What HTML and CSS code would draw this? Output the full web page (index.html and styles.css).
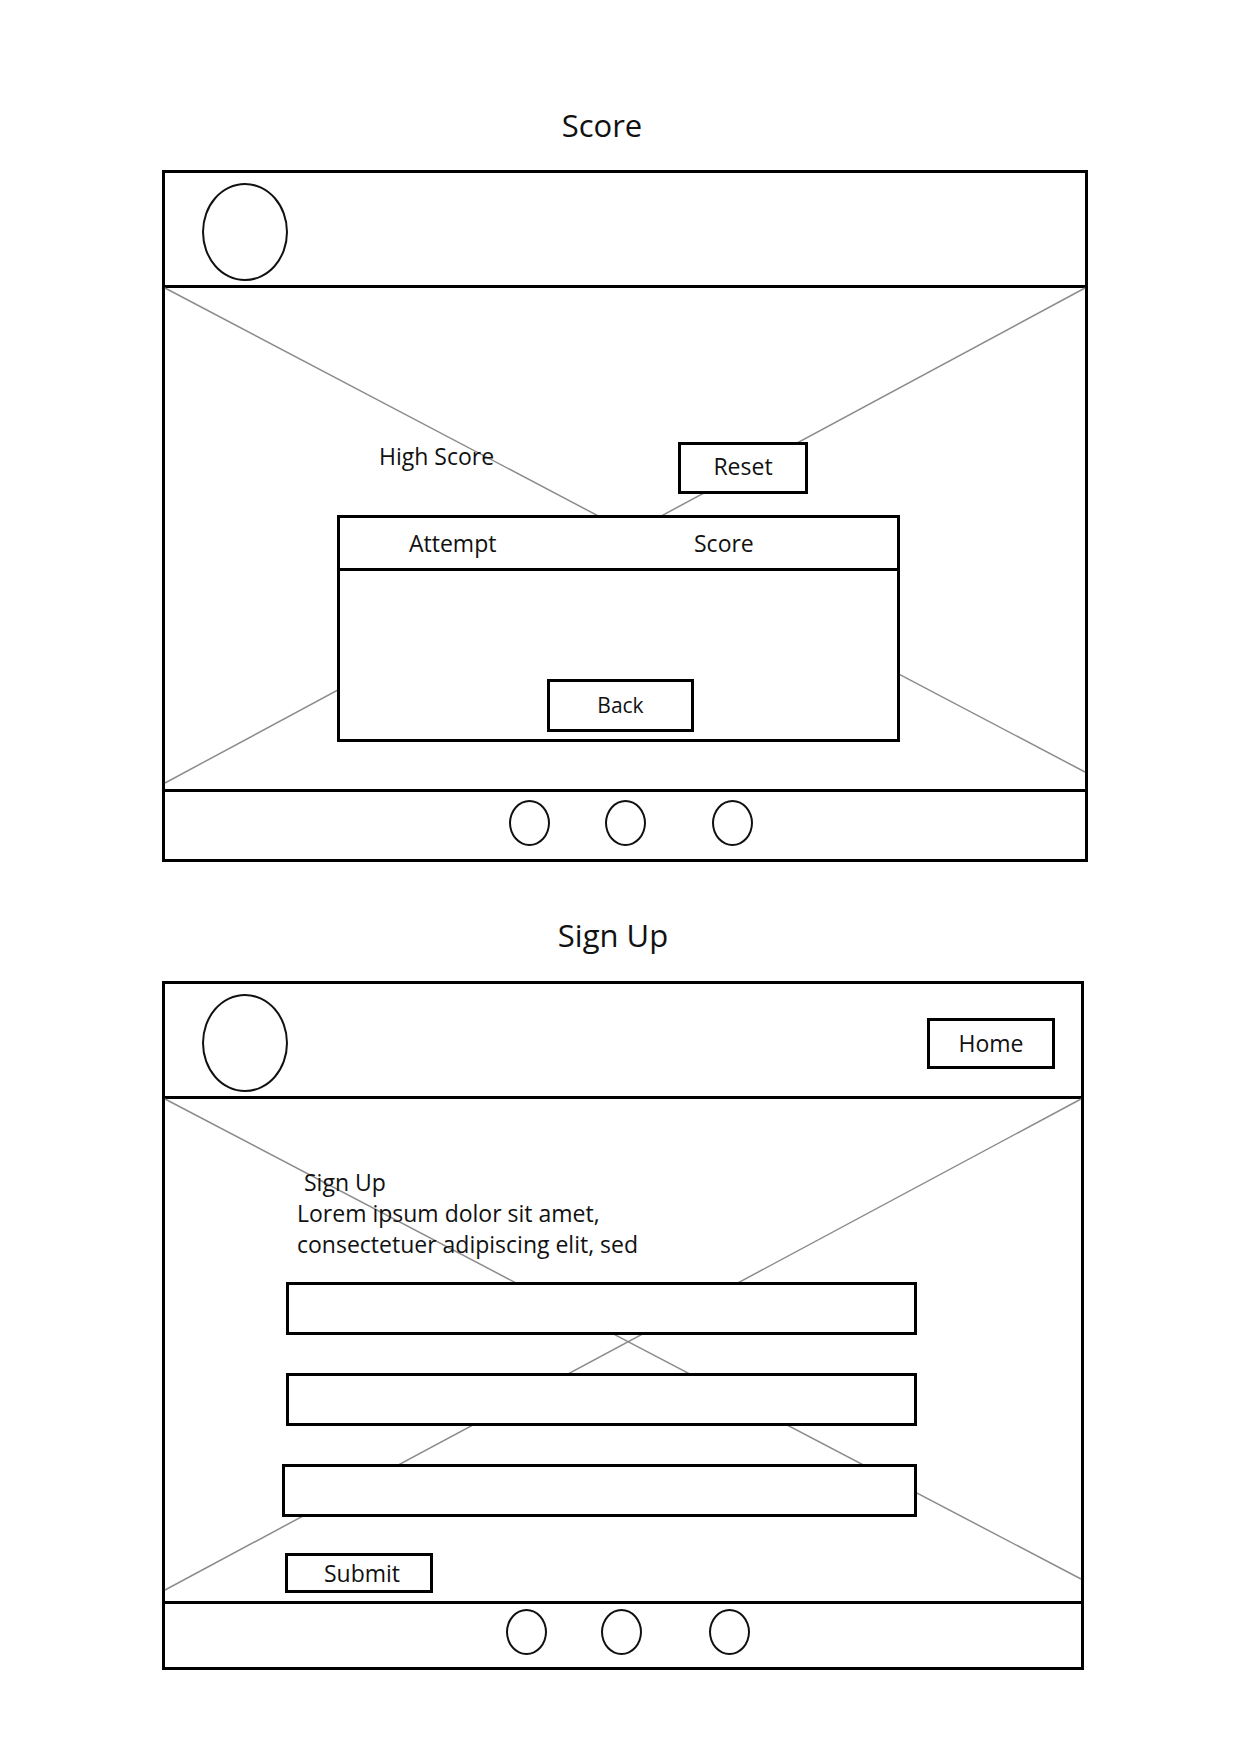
FILE: index.html
```html
<!DOCTYPE html>
<html lang="en">
<head>
<meta charset="utf-8">
<title>Wireframes</title>
<link rel="stylesheet" href="styles.css">
</head>
<body>
<div class="page">
  <section class="screen">
    <h1 class="screen-title title-score">Score</h1>
    <div class="frame frame-score">
      <header class="frame-header">
        <div class="logo"></div>
      </header>
      <main class="frame-body body-score">
        <svg class="placeholder-x" viewBox="0 0 920 501" preserveAspectRatio="none">
          <line x1="0" y1="0" x2="920" y2="484"/>
          <line x1="920" y1="0" x2="0" y2="495"/>
        </svg>
        <div class="score-content">
          <div class="score-top">
            <span class="high-score">High Score</span>
            <div class="btn btn-reset">Reset</div>
          </div>
          <div class="score-table">
            <div class="score-table-head">
              <span class="col-attempt">Attempt</span>
              <span class="col-score">Score</span>
            </div>
            <div class="score-table-body">
              <div class="btn btn-back">Back</div>
            </div>
          </div>
        </div>
      </main>
      <footer class="frame-footer footer-score">
        <span class="dot"></span>
        <span class="dot"></span>
        <span class="dot dot-last"></span>
      </footer>
    </div>
  </section>

  <section class="screen screen-signup">
    <h1 class="screen-title title-signup">Sign Up</h1>
    <div class="frame frame-signup">
      <header class="frame-header">
        <div class="logo"></div>
        <div class="btn btn-home">Home</div>
      </header>
      <main class="frame-body body-signup">
        <svg class="placeholder-x" viewBox="0 0 916 502" preserveAspectRatio="none">
          <line x1="0" y1="0" x2="916" y2="480"/>
          <line x1="916" y1="0" x2="0" y2="491"/>
        </svg>
        <div class="signup-content">
          <div class="signup-intro">
            <div class="signup-heading">Sign Up</div>
            <div>Lorem ipsum dolor sit amet,</div>
            <div>consectetuer adipiscing elit, sed</div>
          </div>
          <div class="field field-first"></div>
          <div class="field"></div>
          <div class="field field-wide"></div>
          <div class="btn btn-submit">Submit</div>
        </div>
      </main>
      <footer class="frame-footer footer-signup">
        <span class="dot"></span>
        <span class="dot"></span>
        <span class="dot dot-last"></span>
      </footer>
    </div>
  </section>
</div>
</body>
</html>
```

FILE: styles.css
```css
html, body {
  margin: 0;
  padding: 0;
  background: #fff;
}

body {
  font-family: "Open Sans", "Liberation Sans", sans-serif;
  color: #111;
}

.page {
  width: 1240px;
  padding-top: 110px;
}

.screen-signup {
  margin-top: 58px;
}

.screen-title {
  margin: 0;
  font-size: 31px;
  line-height: 31px;
  font-weight: 400;
  text-align: center;
}

.title-score {
  padding-right: 36px;
  margin-bottom: 29px;
}

.title-signup {
  padding-right: 14px;
  margin-bottom: 30px;
}

.frame {
  margin-left: 162px;
  border: 3px solid #000;
  box-sizing: border-box;
  display: flex;
  flex-direction: column;
  background: #fff;
}

.frame-score {
  width: 926px;
}

.frame-signup {
  width: 922px;
}

.frame-header {
  height: 115px;
  box-sizing: border-box;
  border-bottom: 3px solid #000;
  display: flex;
  align-items: center;
  justify-content: space-between;
  padding: 6px 26px 0 37px;
}

.logo {
  width: 86px;
  height: 98px;
  box-sizing: border-box;
  border: 2.5px solid #111;
  border-radius: 50%;
}

.frame-body {
  position: relative;
}

.body-score {
  height: 501px;
}

.body-signup {
  height: 502px;
}

.placeholder-x {
  position: absolute;
  left: 0;
  top: 0;
  width: 100%;
  height: 100%;
  overflow: visible;
}

.placeholder-x line {
  stroke: #8c8c8c;
  stroke-width: 1.5;
  vector-effect: non-scaling-stroke;
}

.btn {
  box-sizing: border-box;
  border: 3px solid #000;
  background: #fff;
  display: flex;
  align-items: center;
  justify-content: center;
  font-size: 23px;
  line-height: 23px;
}

.btn-home {
  width: 128px;
  height: 51px;
}

/* Score screen */
.score-content {
  position: relative;
  padding-top: 154px;
}

.score-top {
  display: flex;
  align-items: flex-start;
  padding-left: 214px;
}

.high-score {
  width: 299px;
  margin-top: 3px;
  font-size: 23px;
  line-height: 23px;
}

.btn-reset {
  width: 130px;
  height: 52px;
  padding-bottom: 4px;
}

.score-table {
  margin-top: 21px;
  margin-left: 172px;
  width: 563px;
  height: 227px;
  box-sizing: border-box;
  border: 3px solid #000;
  background: #fff;
  display: flex;
  flex-direction: column;
}

.score-table-head {
  height: 53px;
  box-sizing: border-box;
  border-bottom: 3px solid #000;
  display: grid;
  grid-template-columns: 285px auto;
  align-items: center;
  padding-left: 69px;
  font-size: 23px;
  line-height: 23px;
}

.score-table-body {
  flex: 1;
  display: flex;
  align-items: flex-end;
  justify-content: center;
  padding-bottom: 7px;
  padding-left: 4px;
}

.btn-back {
  width: 147px;
  height: 53px;
  font-size: 21px;
}

/* Sign up screen */
.signup-content {
  position: relative;
  padding-top: 68px;
}

.signup-intro {
  margin-left: 132px;
  font-size: 23px;
  line-height: 31px;
}

.signup-heading {
  padding-left: 7px;
}

.field {
  margin-left: 121px;
  width: 631px;
  height: 53px;
  box-sizing: border-box;
  border: 3px solid #000;
  background: #fff;
  margin-top: 38px;
}

.field-first {
  margin-top: 22px;
}

.field-wide {
  margin-left: 117px;
  width: 635px;
}

.btn-submit {
  margin-left: 120px;
  margin-top: 36px;
  width: 148px;
  height: 40px;
  padding-left: 6px;
}

/* Footer */
.frame-footer {
  border-top: 3px solid #000;
  box-sizing: border-box;
  display: flex;
  align-items: center;
}

.footer-score {
  height: 70px;
  padding: 0 0 5px 344px;
  gap: 55px;
}

.footer-score .dot-last {
  margin-left: 11px;
}

.footer-signup {
  height: 66px;
  padding: 0 0 7px 341px;
  gap: 54px;
}

.footer-signup .dot-last {
  margin-left: 13px;
}

.dot {
  width: 41px;
  height: 46px;
  box-sizing: border-box;
  border: 2.5px solid #111;
  border-radius: 50%;
}
```
